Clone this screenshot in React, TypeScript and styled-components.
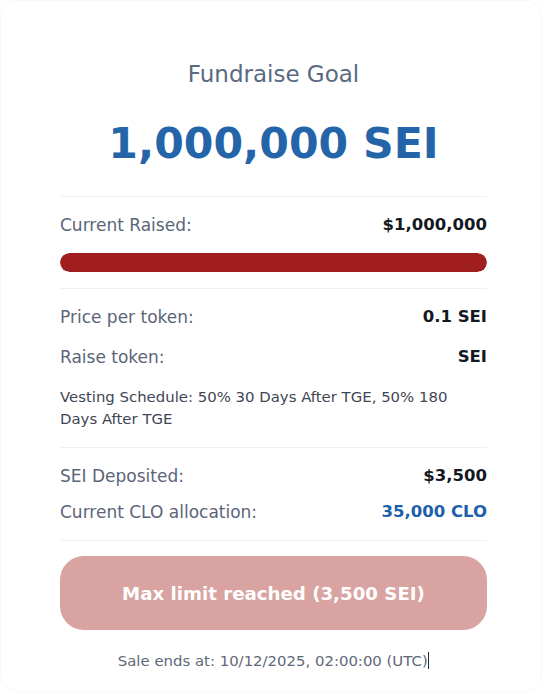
import React, { FunctionComponent } from 'react';
import styled, { createGlobalStyle } from 'styled-components';

const GlobalStyle = createGlobalStyle`
  html, body {
    margin: 0;
    padding: 0;
    background: #ffffff;
  }
  body {
    font-family: 'DejaVu Sans', 'Open Sans', sans-serif;
  }
`;

const Card = styled.div`
  box-sizing: border-box;
  width: 542px;
  height: 692px;
  background: #fff;
  border-radius: 18px;
  border: 1px solid #f7f8f9;
  padding: 59px 54px 0 59px;
  display: flex;
  flex-direction: column;
`;

const Title = styled.div`
  text-align: center;
  font-size: 23px;
  font-weight: normal;
  color: #5a6982;
  line-height: 28px;
`;

const Goal = styled.div`
  margin-top: 29px;
  margin-bottom: 27px;
  text-align: center;
  font-size: 42.6px;
  font-weight: bold;
  color: #2464a9;
  line-height: 52px;
`;

const Divider = styled.div`
  height: 1px;
  background: #eef0f3;
`;

const Section = styled.div<{ $gap?: number }>`
  display: flex;
  flex-direction: column;
  gap: ${p => p.$gap ?? 16}px;
  padding: 16px 0;
`;

const Row = styled.div`
  display: flex;
  justify-content: space-between;
  align-items: center;
  line-height: 24px;
`;

const Label = styled.span`
  font-size: 17px;
  color: #5b6579;
`;

const Value = styled.span<{ $accent?: boolean }>`
  font-size: 16.5px;
  font-weight: bold;
  color: ${p => (p.$accent ? '#1d60aa' : '#141820')};
`;

const Track = styled.div`
  height: 19px;
  border-radius: 10px;
  background: #eceef2;
  overflow: hidden;
`;

const Fill = styled.div`
  height: 100%;
  border-radius: 10px;
  background: #a11e1e;
`;

const Vesting = styled.div`
  font-size: 14.9px;
  line-height: 22px;
  color: #3f4654;
  max-width: 405px;
  margin: 1px 0;
`;

const LimitButton = styled.button`
  margin-top: 15px;
  height: 74px;
  border: none;
  border-radius: 24px;
  background: #d8a3a0;
  color: #fff;
  font-family: inherit;
  font-size: 18.2px;
  font-weight: bold;
  cursor: not-allowed;
`;

const SaleEnds = styled.div`
  margin-top: 20px;
  text-align: center;
  font-size: 14.9px;
  line-height: 22px;
  color: #5f6878;
`;

const Caret = styled.span`
  display: inline-block;
  width: 1.5px;
  height: 17px;
  background: #1e2a3a;
  vertical-align: -3px;
`;

const App: FunctionComponent = () => {
  const raised = 1000000;
  const goal = 1000000;

  return (
    <>
      <GlobalStyle />
      <Card>
        <Title>Fundraise Goal</Title>
        <Goal>1,000,000 SEI</Goal>
        <Divider />
        <Section $gap={16}>
          <Row>
            <Label>Current Raised:</Label>
            <Value>$1,000,000</Value>
          </Row>
          <Track>
            <Fill style={{ width: `${(raised / goal) * 100}%` }} />
          </Track>
        </Section>
        <Divider />
        <Section $gap={16}>
          <Row>
            <Label>Price per token:</Label>
            <Value>0.1 SEI</Value>
          </Row>
          <Row>
            <Label>Raise token:</Label>
            <Value>SEI</Value>
          </Row>
          <Vesting>Vesting Schedule: 50% 30 Days After TGE, 50% 180 Days After TGE</Vesting>
        </Section>
        <Divider />
        <Section $gap={12}>
          <Row>
            <Label>SEI Deposited:</Label>
            <Value>$3,500</Value>
          </Row>
          <Row>
            <Label>Current CLO allocation:</Label>
            <Value $accent>35,000 CLO</Value>
          </Row>
        </Section>
        <Divider />
        <LimitButton disabled>Max limit reached (3,500 SEI)</LimitButton>
        <SaleEnds>
          Sale ends at: 10/12/2025, 02:00:00 (UTC)
          <Caret />
        </SaleEnds>
      </Card>
    </>
  );
};

export default App;
